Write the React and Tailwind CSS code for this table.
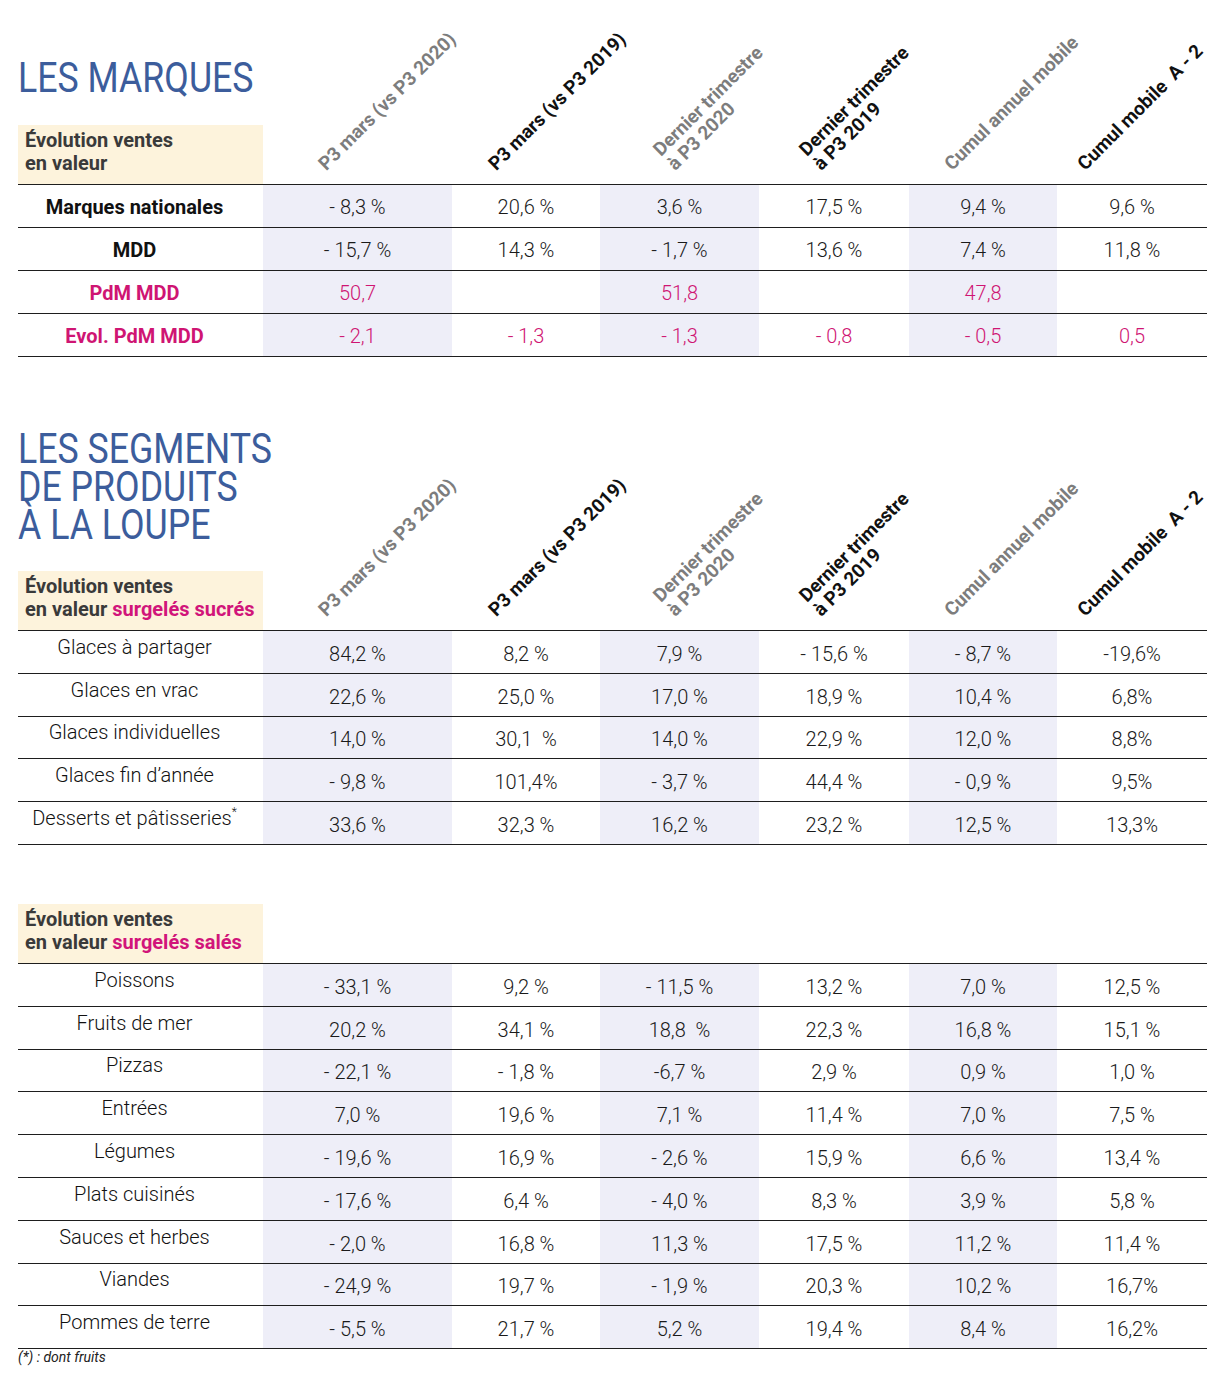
const FONT = "font-['Roboto',sans-serif]";
const COLS = "grid grid-cols-[245px_189px_148px_159px_150px_148px_150px]";
const SHADE = [false, true, false, true, false, true, false];

const headers = [
  { lines: ["P3 mars (vs P3 2020)"], gray: true, pad: "pl-[66px]" },
  { lines: ["P3 mars (vs P3 2019)"], gray: false, pad: "pl-[47px]" },
  { lines: ["Dernier trimestre", "à P3 2020"], gray: true, pad: "pl-[78px]" },
  { lines: ["Dernier trimestre", "à P3 2019"], gray: false, pad: "pl-[65px]" },
  { lines: ["Cumul annuel mobile"], gray: true, pad: "pl-[46px]" },
  { lines: ["Cumul mobile  A - 2"], gray: false, pad: "pl-[31px]" },
];

const marques = [
  { label: "Marques nationales", kind: "black", vals: ["- 8,3 %", "20,6 %", "3,6 %", "17,5 %", "9,4 %", "9,6 %"] },
  { label: "MDD", kind: "black", vals: ["- 15,7 %", "14,3 %", "- 1,7 %", "13,6 %", "7,4 %", "11,8 %"] },
  { label: "PdM MDD", kind: "pink", vals: ["50,7", "", "51,8", "", "47,8", ""] },
  { label: "Evol. PdM MDD", kind: "pink", vals: ["- 2,1", "- 1,3", "- 1,3", "- 0,8", "- 0,5", "0,5"] },
];

const sucres = [
  { label: "Glaces à partager", vals: ["84,2 %", "8,2 %", "7,9 %", "- 15,6 %", "- 8,7 %", "-19,6%"] },
  { label: "Glaces en vrac", vals: ["22,6 %", "25,0 %", "17,0 %", "18,9 %", "10,4 %", "6,8%"] },
  { label: "Glaces individuelles", vals: ["14,0 %", "30,1  %", "14,0 %", "22,9 %", "12,0 %", "8,8%"] },
  { label: "Glaces fin d’année", vals: ["- 9,8 %", "101,4%", "- 3,7 %", "44,4 %", "- 0,9 %", "9,5%"] },
  { label: "Desserts et pâtisseries", star: true, vals: ["33,6 %", "32,3 %", "16,2 %", "23,2 %", "12,5 %", "13,3%"] },
];

const sales = [
  { label: "Poissons", vals: ["- 33,1 %", "9,2 %", "- 11,5 %", "13,2 %", "7,0 %", "12,5 %"] },
  { label: "Fruits de mer", vals: ["20,2 %", "34,1 %", "18,8  %", "22,3 %", "16,8 %", "15,1 %"] },
  { label: "Pizzas", vals: ["- 22,1 %", "- 1,8 %", "-6,7 %", "2,9 %", "0,9 %", "1,0 %"] },
  { label: "Entrées", vals: ["7,0 %", "19,6 %", "7,1 %", "11,4 %", "7,0 %", "7,5 %"] },
  { label: "Légumes", vals: ["- 19,6 %", "16,9 %", "- 2,6 %", "15,9 %", "6,6 %", "13,4 %"] },
  { label: "Plats cuisinés", vals: ["- 17,6 %", "6,4 %", "- 4,0 %", "8,3 %", "3,9 %", "5,8 %"] },
  { label: "Sauces et herbes", vals: ["- 2,0 %", "16,8 %", "11,3 %", "17,5 %", "11,2 %", "11,4 %"] },
  { label: "Viandes", vals: ["- 24,9 %", "19,7 %", "- 1,9 %", "20,3 %", "10,2 %", "16,7%"] },
  { label: "Pommes de terre", vals: ["- 5,5 %", "21,7 %", "5,2 %", "19,4 %", "8,4 %", "16,2%"] },
];

function LabelBox({ children }) {
  return (
    <div className="h-[59px] whitespace-nowrap bg-[#fdf3dc] px-[7px] pt-[4px] text-[20px] font-bold leading-[23px] text-[#3a3a3a]">
      {children}
    </div>
  );
}

function HeaderCells() {
  return headers.map((h, i) => (
    <div key={i} className={`flex items-end pb-[10px] ${h.pad}`}>
      <div
        className={`origin-bottom-left -rotate-45 whitespace-pre text-[19px] font-bold leading-[20px] ${
          h.gray ? "text-[#7d7d7d]" : "text-[#111]"
        }`}
      >
        {h.lines.map((l, j) => (
          <div key={j}>{l}</div>
        ))}
      </div>
    </div>
  ));
}

function MarquesRow({ row }) {
  const pink = row.kind === "pink";
  return (
    <div className={`${COLS} border-t border-[#1e1e1e]`}>
      <div
        className={`flex h-[42px] items-center justify-center pr-[12px] pt-[2px] text-[20px] font-bold ${
          pink ? "text-[#cf1573]" : "text-[#111]"
        }`}
      >
        {row.label}
      </div>
      {row.vals.map((v, i) => (
        <div
          key={i}
          className={`flex h-[42px] items-center justify-center whitespace-pre pt-[2px] text-[20px] font-light ${
            SHADE[i + 1] ? "bg-[#eeeef8]" : ""
          } ${pink ? "text-[#cf1573]" : "text-[#1a1a1a]"}`}
        >
          {v}
        </div>
      ))}
    </div>
  );
}

function SegRow({ row }) {
  return (
    <div className={`${COLS} border-t border-[#1e1e1e]`}>
      <div className="flex h-[41.8px] items-center justify-center pb-[10px] pr-[12px] text-[20px] font-light text-[#111]">
        {row.label}
        {row.star && <sup className="text-[12px]">*</sup>}
      </div>
      {row.vals.map((v, i) => (
        <div
          key={i}
          className={`flex h-[41.8px] items-center justify-center whitespace-pre pt-[4px] text-[20px] font-light text-[#1a1a1a] ${
            SHADE[i + 1] ? "bg-[#eeeef8]" : ""
          }`}
        >
          {v}
        </div>
      ))}
    </div>
  );
}

export default function App() {
  return (
    <div className={`min-h-[1384px] w-[1228px] bg-white pl-[18px] ${FONT}`}>
      <div className="w-[1189px]">
        {/* Section 1 */}
        <div className={`${COLS} h-[184px]`}>
          <div className="flex flex-col justify-end">
            <h1 className="mb-[26px] origin-left scale-x-[0.85] whitespace-nowrap text-[42px] font-normal leading-none text-[#3c5d9c]">
              LES MARQUES
            </h1>
            <LabelBox>
              Évolution ventes
              <br />
              en valeur
            </LabelBox>
          </div>
          <HeaderCells />
        </div>
        <div className="border-b border-[#1e1e1e]">
          {marques.map((r) => (
            <MarquesRow key={r.label} row={r} />
          ))}
        </div>

        {/* Section 2 */}
        <div className={`${COLS} h-[273px]`}>
          <div className="flex flex-col justify-end">
            <h2 className="mb-[27px] origin-left scale-x-[0.85] whitespace-nowrap text-[42px] font-normal leading-[38px] text-[#3c5d9c]">
              LES SEGMENTS
              <br />
              DE PRODUITS
              <br />À LA LOUPE
            </h2>
            <LabelBox>
              Évolution ventes
              <br />
              en valeur <span className="text-[#d1157a]">surgelés sucrés</span>
            </LabelBox>
          </div>
          <HeaderCells />
        </div>
        <div className="border-b border-[#1e1e1e]">
          {sucres.map((r) => (
            <SegRow key={r.label} row={r} />
          ))}
        </div>

        {/* Section 3 */}
        <div className={`${COLS} mt-[59px]`}>
          <LabelBox>
            Évolution ventes
            <br />
            en valeur <span className="text-[#d1157a]">surgelés salés</span>
          </LabelBox>
        </div>
        <div className="border-b border-[#1e1e1e]">
          {sales.map((r) => (
            <SegRow key={r.label} row={r} />
          ))}
        </div>
        <p className="pt-[1px] text-[14px] italic leading-[15px] text-[#222]">(*) : dont fruits</p>
      </div>
    </div>
  );
}
